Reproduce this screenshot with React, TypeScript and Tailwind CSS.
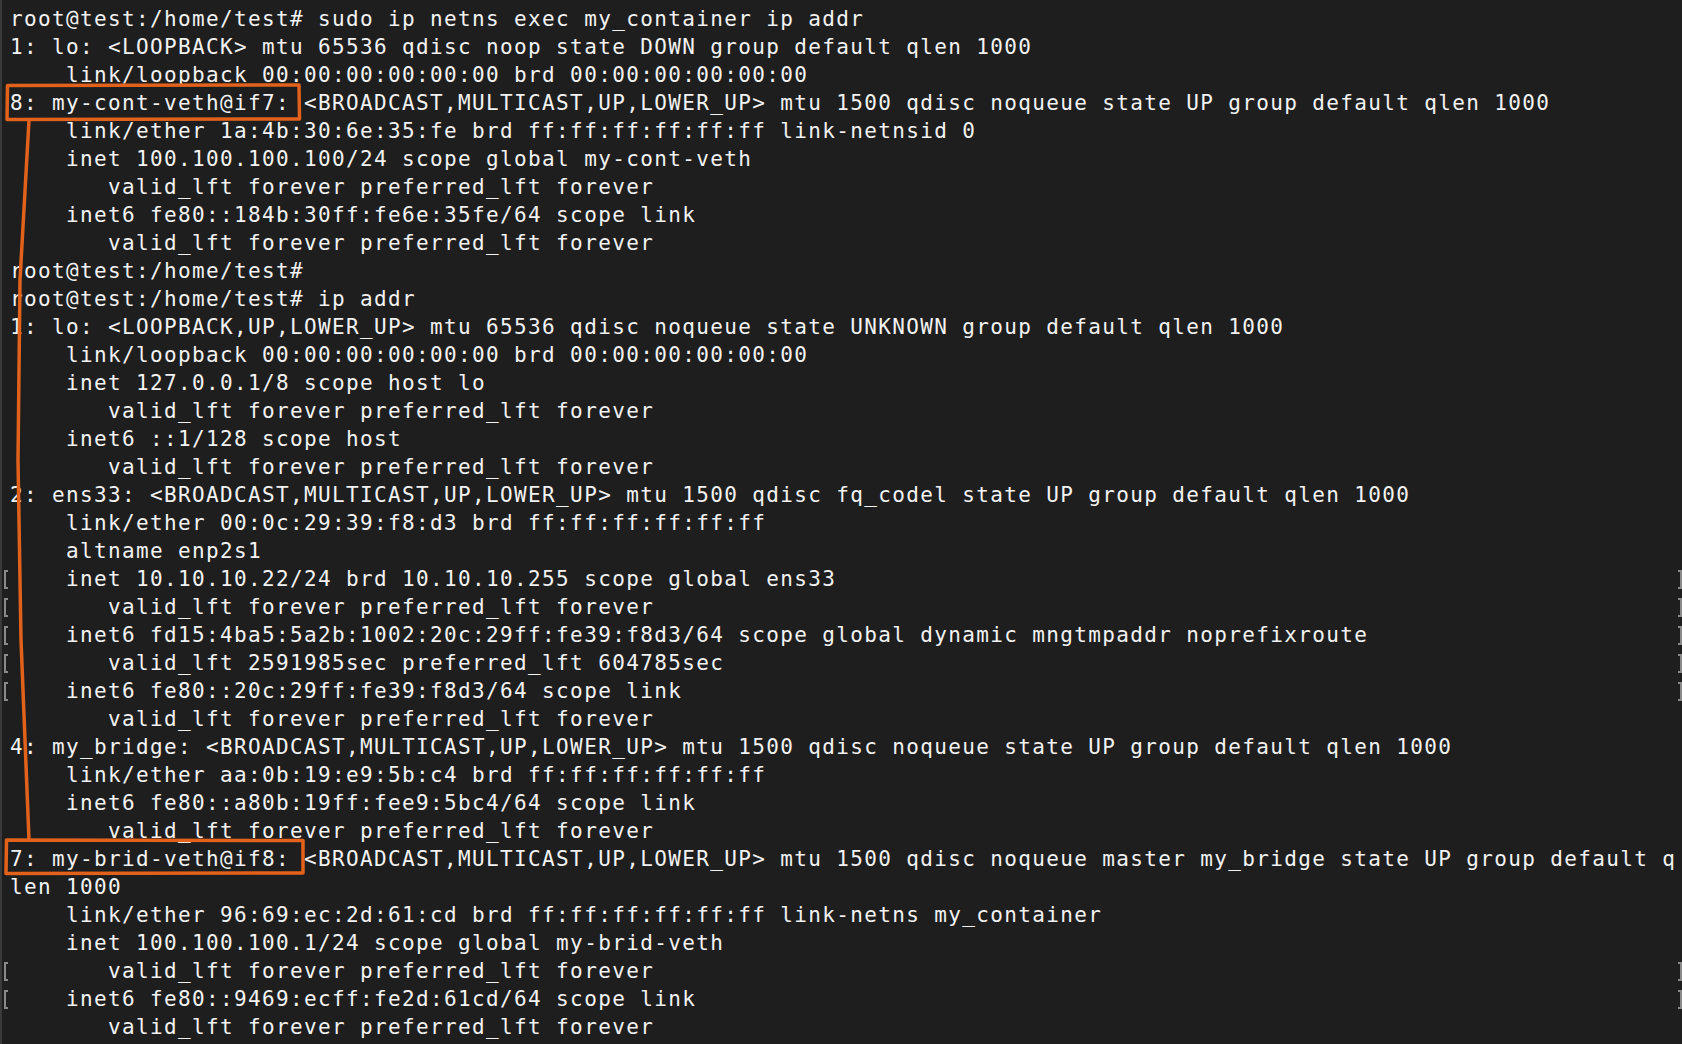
import React from 'react';

// 端末の出力（1行ずつ）。mark: 左右のガター括弧を表示する行
interface Line {
  text: string;
  mark?: boolean;
}

const lines: Line[] = [
  { text: 'root@test:/home/test# sudo ip netns exec my_container ip addr' },
  { text: '1: lo: <LOOPBACK> mtu 65536 qdisc noop state DOWN group default qlen 1000' },
  { text: '    link/loopback 00:00:00:00:00:00 brd 00:00:00:00:00:00' },
  { text: '8: my-cont-veth@if7: <BROADCAST,MULTICAST,UP,LOWER_UP> mtu 1500 qdisc noqueue state UP group default qlen 1000' },
  { text: '    link/ether 1a:4b:30:6e:35:fe brd ff:ff:ff:ff:ff:ff link-netnsid 0' },
  { text: '    inet 100.100.100.100/24 scope global my-cont-veth' },
  { text: '       valid_lft forever preferred_lft forever' },
  { text: '    inet6 fe80::184b:30ff:fe6e:35fe/64 scope link' },
  { text: '       valid_lft forever preferred_lft forever' },
  { text: 'root@test:/home/test#' },
  { text: 'root@test:/home/test# ip addr' },
  { text: '1: lo: <LOOPBACK,UP,LOWER_UP> mtu 65536 qdisc noqueue state UNKNOWN group default qlen 1000' },
  { text: '    link/loopback 00:00:00:00:00:00 brd 00:00:00:00:00:00' },
  { text: '    inet 127.0.0.1/8 scope host lo' },
  { text: '       valid_lft forever preferred_lft forever' },
  { text: '    inet6 ::1/128 scope host' },
  { text: '       valid_lft forever preferred_lft forever' },
  { text: '2: ens33: <BROADCAST,MULTICAST,UP,LOWER_UP> mtu 1500 qdisc fq_codel state UP group default qlen 1000' },
  { text: '    link/ether 00:0c:29:39:f8:d3 brd ff:ff:ff:ff:ff:ff' },
  { text: '    altname enp2s1' },
  { text: '    inet 10.10.10.22/24 brd 10.10.10.255 scope global ens33', mark: true },
  { text: '       valid_lft forever preferred_lft forever', mark: true },
  { text: '    inet6 fd15:4ba5:5a2b:1002:20c:29ff:fe39:f8d3/64 scope global dynamic mngtmpaddr noprefixroute', mark: true },
  { text: '       valid_lft 2591985sec preferred_lft 604785sec', mark: true },
  { text: '    inet6 fe80::20c:29ff:fe39:f8d3/64 scope link', mark: true },
  { text: '       valid_lft forever preferred_lft forever' },
  { text: '4: my_bridge: <BROADCAST,MULTICAST,UP,LOWER_UP> mtu 1500 qdisc noqueue state UP group default qlen 1000' },
  { text: '    link/ether aa:0b:19:e9:5b:c4 brd ff:ff:ff:ff:ff:ff' },
  { text: '    inet6 fe80::a80b:19ff:fee9:5bc4/64 scope link' },
  { text: '       valid_lft forever preferred_lft forever' },
  { text: '7: my-brid-veth@if8: <BROADCAST,MULTICAST,UP,LOWER_UP> mtu 1500 qdisc noqueue master my_bridge state UP group default q' },
  { text: 'len 1000' },
  { text: '    link/ether 96:69:ec:2d:61:cd brd ff:ff:ff:ff:ff:ff link-netns my_container' },
  { text: '    inet 100.100.100.1/24 scope global my-brid-veth' },
  { text: '       valid_lft forever preferred_lft forever', mark: true },
  { text: '    inet6 fe80::9469:ecff:fe2d:61cd/64 scope link', mark: true },
  { text: '       valid_lft forever preferred_lft forever' },
];

// 赤枠と接続線の注釈
function Annotation() {
  return (
    <svg
      className="absolute inset-0 pointer-events-none"
      width={1682}
      height={1044}
      viewBox="0 0 1682 1044"
    >
      <g fill="none" stroke="#e2621b" strokeWidth={3.5} strokeLinejoin="round" strokeLinecap="round">
        <path d="M5.5 85.5 L297 85 L297.5 119 L5 119.5 Z" />
        <path d="M4.5 840 L301 840.5 L301 873 L4 873.5 Z" />
        <path d="M27 120 L18 280 L16 460 L19 640 L27 840" />
      </g>
    </svg>
  );
}

export default function App() {
  return (
    <div className="relative w-[1682px] h-[1044px] overflow-hidden bg-[#1e1e1e] border-l-2 border-[#3a3a3a]">
      <div className="pt-[5px]">
        {lines.map((line, i) => (
          <div key={i} className="flex items-center h-[28px]">
            <div className="w-[8px] shrink-0 flex items-center justify-start pl-[2px]">
              {line.mark && (
                <span className="block w-[4px] h-[19px] border-2 border-r-0 border-[#8a8a8a]" />
              )}
            </div>
            <div
              className="flex-1 whitespace-pre text-[#f2f2f2] text-[21px] leading-[28px] tracking-[1.36px]"
              style={{ fontFamily: '"DejaVu Sans Mono", "Liberation Mono", monospace' }}
            >
              {line.text}
            </div>
            <div className="w-[4px] shrink-0 flex items-center justify-end">
              {line.mark && (
                <span className="block w-[4px] h-[19px] border-2 border-l-0 border-[#8a8a8a]" />
              )}
            </div>
          </div>
        ))}
      </div>
      <Annotation />
    </div>
  );
}
